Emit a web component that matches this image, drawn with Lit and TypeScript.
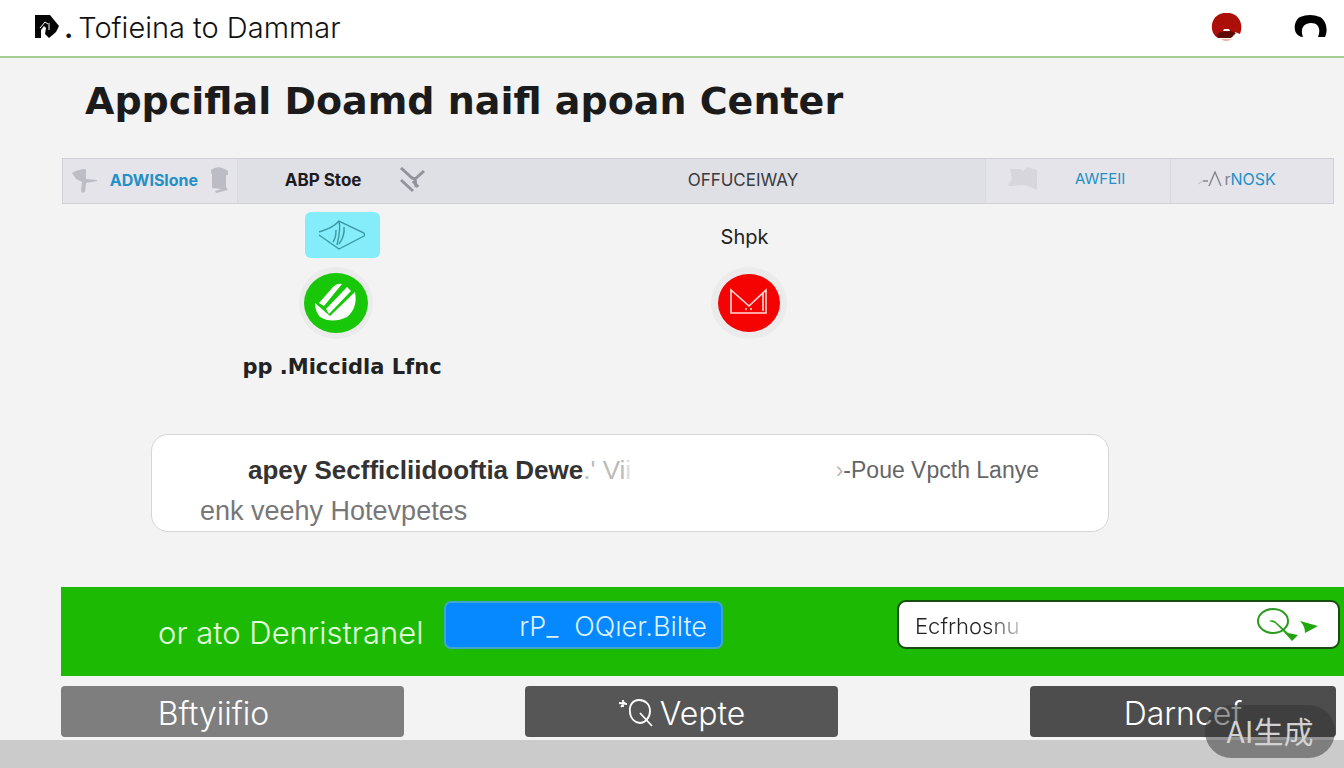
import { LitElement, html, css } from "lit";
import { customElement } from "lit/decorators.js";

@customElement("app-root")
export class AppRoot extends LitElement {
  static styles = css`
    :host {
      display: block;
      font-family: Inter, "Noto Sans", sans-serif;
      color: #222;
    }
    * {
      box-sizing: border-box;
    }
    a {
      color: inherit;
      text-decoration: none;
    }
    button {
      font: inherit;
      border: 0;
      padding: 0;
      background: none;
      cursor: pointer;
    }
    svg {
      display: block;
      flex: none;
    }
    h1,
    h2,
    p {
      margin: 0;
    }
    .page {
      position: relative;
      min-height: 100vh;
      display: flex;
      flex-direction: column;
      background: #f3f3f3;
    }
    .top {
      display: flex;
      align-items: center;
      height: 58px;
      padding: 0 17px 2px 34px;
      background: #fff;
      border-bottom: 2px solid #a5cd94;
    }
    .brand {
      display: flex;
      align-items: center;
      flex: 1;
      gap: 5px;
      font-size: 29px;
      font-weight: 300;
      line-height: 36px;
      color: #111;
    }
    .brand span {
      padding-top: 2px;
    }
    .dot {
      font-weight: 600;
    }
    .account {
      display: flex;
      align-items: center;
      gap: 50px;
    }
    h1 {
      padding: 21px 24px 0 85px;
      font: 700 38px/44px "DejaVu Sans", sans-serif;
      color: #1b1b1b;
    }
    .tabs {
      display: grid;
      grid-template-columns: 175fr 749fr 186fr 162fr;
      height: 46px;
      margin: 35px 10px 0 62px;
      border: 1px solid #cfcfd4;
      background: #e4e4ea;
      font-size: 16px;
      line-height: 20px;
    }
    .tab {
      display: flex;
      align-items: center;
      border-right: 1px solid #d9d9df;
      color: #2390c6;
    }
    .tab:last-child {
      border-right: 0;
    }
    .first {
      justify-content: space-between;
      padding: 0 8px 2px 8px;
      font-weight: 700;
    }
    .wide {
      display: grid;
      grid-template-columns: 141fr 560fr;
      padding: 0 0 2px 47px;
      background: #dfdfe6;
      color: #1c1c1f;
      font-size: 17px;
    }
    .store {
      display: flex;
      align-items: center;
      justify-content: space-between;
      font-weight: 700;
    }
    .office {
      padding-left: 76px;
      text-align: center;
      color: #3a3a3e;
    }
    .third {
      justify-content: space-between;
      padding: 0 45px 4px 20px;
      font-size: 15px;
    }
    .last {
      justify-content: center;
      padding: 0 30px 4px 0;
      font-size: 16px;
    }
    .grey {
      color: #85858e;
    }
    .apps {
      display: grid;
      grid-template-columns: 560fr 377fr 407fr;
      padding-top: 8px;
    }
    .app {
      display: flex;
      flex-direction: column;
      align-items: center;
    }
    .mine {
      padding-left: 124px;
    }
    .chip {
      display: grid;
      place-items: center;
      width: 75px;
      height: 46px;
      border-radius: 6px;
      background: #84edf9;
      margin-bottom: 8px;
    }
    .app h2 {
      margin-top: 11px;
      font: 700 21px/32px "DejaVu Sans", sans-serif;
      color: #222;
    }
    .shop {
      padding: 13px 8px 18px 0;
      font-size: 20px;
      line-height: 24px;
    }
    .card {
      display: flex;
      justify-content: space-between;
      margin: 51px 235px 0 151px;
      padding: 16px 69px 0 48px;
      height: 98px;
      border: 1px solid #d5d5d5;
      border-radius: 17px;
      background: #fff;
      font: 400 27px/44px "Liberation Sans", sans-serif;
      color: #777;
    }
    .card h2 {
      padding-left: 48px;
      font: 700 26px/38px "Liberation Sans", sans-serif;
      color: #333;
    }
    .card .fade {
      font-weight: 400;
      color: #bbb;
    }
    .card .fainter {
      color: #ddd;
    }
    .side {
      font-size: 23px;
      line-height: 38px;
      color: #666;
    }
    .banner {
      display: flex;
      align-items: flex-start;
      height: 89px;
      margin: 55px 0 0 61px;
      padding: 13px 4px 0 97px;
      background: #1cba02;
      color: #e6ffe0;
    }
    .lead {
      flex: none;
      width: 286px;
      padding-top: 13px;
      font-size: 31px;
      font-weight: 300;
      line-height: 40px;
    }
    .primary {
      width: 279px;
      height: 48px;
      margin-top: 1px;
      padding: 3px 14px 0 0;
      border: 2px solid #3fa5cf;
      border-radius: 7px;
      background: #0688ff;
      color: #dcf3ff;
      text-align: right;
      font-size: 27px;
      font-weight: 300;
      line-height: 40px;
    }
    .primary span {
      margin-right: 16px;
    }
    .search {
      display: flex;
      align-items: center;
      flex: 0 1 443px;
      min-width: 0;
      height: 49px;
      margin-left: auto;
      padding: 0 18px 0 16px;
      border: 2px solid #174d10;
      border-radius: 9px;
      background: #fff;
    }
    .search input {
      flex: 1;
      min-width: 0;
      height: 40px;
      padding: 2px 0 0;
      border: 0;
      outline: 0;
      font-family: inherit;
      font-size: 22px;
      font-weight: 300;
      color: transparent;
      background: linear-gradient(90deg, #222 74px, #999 96px, #ddd 112px) text;
    }
    .actions {
      display: grid;
      grid-template-columns: 464fr 505fr 306fr;
      padding: 10px 8px 3px 61px;
    }
    .action {
      display: flex;
      align-items: center;
      justify-content: center;
      height: 51px;
      padding-top: 4px;
      border-radius: 4px;
      color: #fff;
      font-size: 32px;
      font-weight: 300;
      line-height: 36px;
    }
    .a1 {
      margin-right: 121px;
      padding-right: 38px;
      background: #7e7e7e;
    }
    .a2 {
      margin-right: 192px;
      background: #565656;
    }
    .a3 {
      background: #4d4d4d;
    }
    .foot {
      flex: 1;
      min-height: 28px;
      background: #cbcbcb;
    }
    .mark {
      position: absolute;
      right: 9px;
      bottom: 10px;
      width: 130px;
      height: 53px;
      border-radius: 27px;
      background: rgba(50, 50, 50, 0.5);
      color: #d2d2d2;
      text-align: center;
      font: 400 30px/50px "Noto Sans CJK SC", sans-serif;
    }
  `;

  render() {
    return html`
      <div class="page">
        <header class="top">
          <a class="brand" href="#">
            <svg width="25" height="24" viewBox="0 0 25 24">
              <path d="M1 0h15l9 11-3 6-7 6-4-4 1-6-2-2-3 4v8H1z" fill="#050505" />
              <path d="M6 13l5-6 3 2M15 15V8" fill="none" stroke="#fff" stroke-width="1" />
            </svg>
            <span class="dot">.</span><span>Tofieina to Dammar</span>
          </a>
          <div class="account">
            <button aria-label="Profile">
              <svg width="34" height="29" viewBox="0 0 34 29">
                <path d="M8 25C-1 20 0 5 10 1q8-3 15 1c6 4 8 12 5 19l-5-2-3 5z" fill="#ab0f08" />
                <path d="M10 19l11-1 5 2-5 5H9l-2-3z" fill="#5d0906" />
                <path d="M14 16h5l1 2h-7z" fill="#fff" />
                <path d="M11 26h11l-4 2h-4z" fill="#efb79f" />
              </svg>
            </button>
            <button aria-label="Support">
              <svg width="33" height="24" viewBox="0 0 33 24">
                <path d="M9 22C-2 21 -1 6 6 2q10-4 20 0c7 4 8 14 5 20h-7c3-7 1-14-7-14-8 0-11 7-8 14z" fill="#000" />
              </svg>
            </button>
          </div>
        </header>

        <h1>Appciflal Doamd naifl apoan Center</h1>

        <nav class="tabs">
          <a class="tab first" href="#">
            <svg width="27" height="25" viewBox="0 0 27 25">
              <path d="M1 5q6-4 14-4v10l11 1v1l-11 2-1 9q-3 2-4-1l1-9-6-3z" fill="#bdbdc5" />
            </svg>
            ADWISlone
            <svg width="19" height="28" viewBox="0 0 19 28">
              <path d="M1 4q7-6 17 1v4h-2v12l2 3-12 3-1-2 6-2-9-1V8L1 7z" fill="#bcbcc4" />
            </svg>
          </a>
          <div class="tab wide">
            <a class="store" href="#">
              ABP Stoe
              <svg width="25" height="26" viewBox="0 0 25 26" fill="none" stroke="#93939e" stroke-width="3">
                <path d="M1 1l11 10 3 1 9-8M15 12l1 8M1 13l12 11M13 14l5 6" />
              </svg>
            </a>
            <a class="office" href="#">OFFUCEIWAY</a>
          </div>
          <a class="tab third" href="#">
            <svg width="32" height="24" viewBox="0 0 32 24">
              <path d="M4 2h10l3 2 5-4 9 3v20l-12-5-17 1 4-8z" fill="#d6d6dc" />
            </svg>
            AWFEII
          </a>
          <a class="tab last" href="#">
            <svg width="26" height="17" viewBox="0 0 26 17" fill="none" stroke="#85858e" stroke-width="1.4">
              <path d="M5 10h5M11 15l6-14 6 14" />
              <path d="M0 13l5-3" stroke="#c8c8ce" />
            </svg>
            <span class="grey">r</span>NOSK
          </a>
        </nav>

        <section class="apps">
          <div class="app mine">
            <div class="chip">
              <svg width="48" height="30" viewBox="0 0 48 30" fill="none" stroke="#3b99a4" stroke-width="1.4">
                <path d="M1 12q14-4 20-11l25 12q1 2 0 3L21 29 1 15M21 1q2 8-2 24M26 7q1 9-5 17M18 10q0 8-3 12" />
              </svg>
            </div>
            <svg width="86" height="74" viewBox="0 0 86 74">
              <ellipse cx="37" cy="37" rx="37" ry="36" fill="#ebebec" />
              <ellipse cx="37" cy="37" rx="32" ry="30" fill="#18c707" />
              <path d="M20 37l14-16q4-4 9-3L25 40zM27 43l21-22 4 4-22 23z" fill="#fff" />
              <path d="M16 37l15 13 25-24q3 16-8 25-15 7-27 0-5-6-5-14z" fill="#fff" />
            </svg>
            <h2>pp .Miccidla Lfnc</h2>
          </div>
          <div class="app">
            <p class="shop">Shpk</p>
            <svg width="76" height="74" viewBox="0 0 76 74">
              <ellipse cx="38" cy="36" rx="38" ry="36" fill="#ebebec" />
              <ellipse cx="38" cy="36" rx="31" ry="29" fill="#f50302" />
              <g fill="none" stroke="#ffdcd8" stroke-width="1.6">
                <path d="M20 23v23h35V23L38 39zM52 26v18" />
                <path d="M34 42h2M39 42h2" />
              </g>
            </svg>
          </div>
        </section>

        <section class="card">
          <div>
            <h2>apey Secfficliidooftia Dewe<span class="fade">.' Vi<span class="fainter">i</span></span></h2>
            <p>enk veehy Hotevpetes</p>
          </div>
          <p class="side"><span class="fade">›</span>-Poue Vpcth Lanye</p>
        </section>

        <section class="banner">
          <p class="lead">or ato Denristranel</p>
          <button class="primary"><span>rP_</span>OQıer.Bilte</button>
          <form class="search">
            <input aria-label="Search" value="Ecfrhosnu" />
            <button type="button" aria-label="Go">
              <svg width="64" height="34" viewBox="0 0 64 34">
                <ellipse cx="17" cy="13" rx="15" ry="12" fill="none" stroke="#2c9a20" stroke-width="2" />
                <path d="M13 13q4-2 7 1l12 11 10 2-6 6-9-10-8-8z" fill="#22a010" />
                <path d="M44 13l18 5-13 7q0-7-5-12z" fill="#1fa80c" />
              </svg>
            </button>
          </form>
        </section>

        <section class="actions">
          <button class="action a1">Bftyiifio</button>
          <button class="action a2">
            <svg width="42" height="32" viewBox="0 0 42 32" fill="none" stroke="#fff" stroke-width="1.8">
              <path d="M12 14C11 7 15 2 21 2s11 4 11 11-5 12-10 12-10-5-10-11zM22 15l12 13M1 5l8 1M5 2v7M7 4L3 9" />
            </svg>
            Vepte
          </button>
          <button class="action a3">Darncef</button>
        </section>

        <div class="foot"></div>
        <div class="mark">AI生成</div>
      </div>
    `;
  }
}
